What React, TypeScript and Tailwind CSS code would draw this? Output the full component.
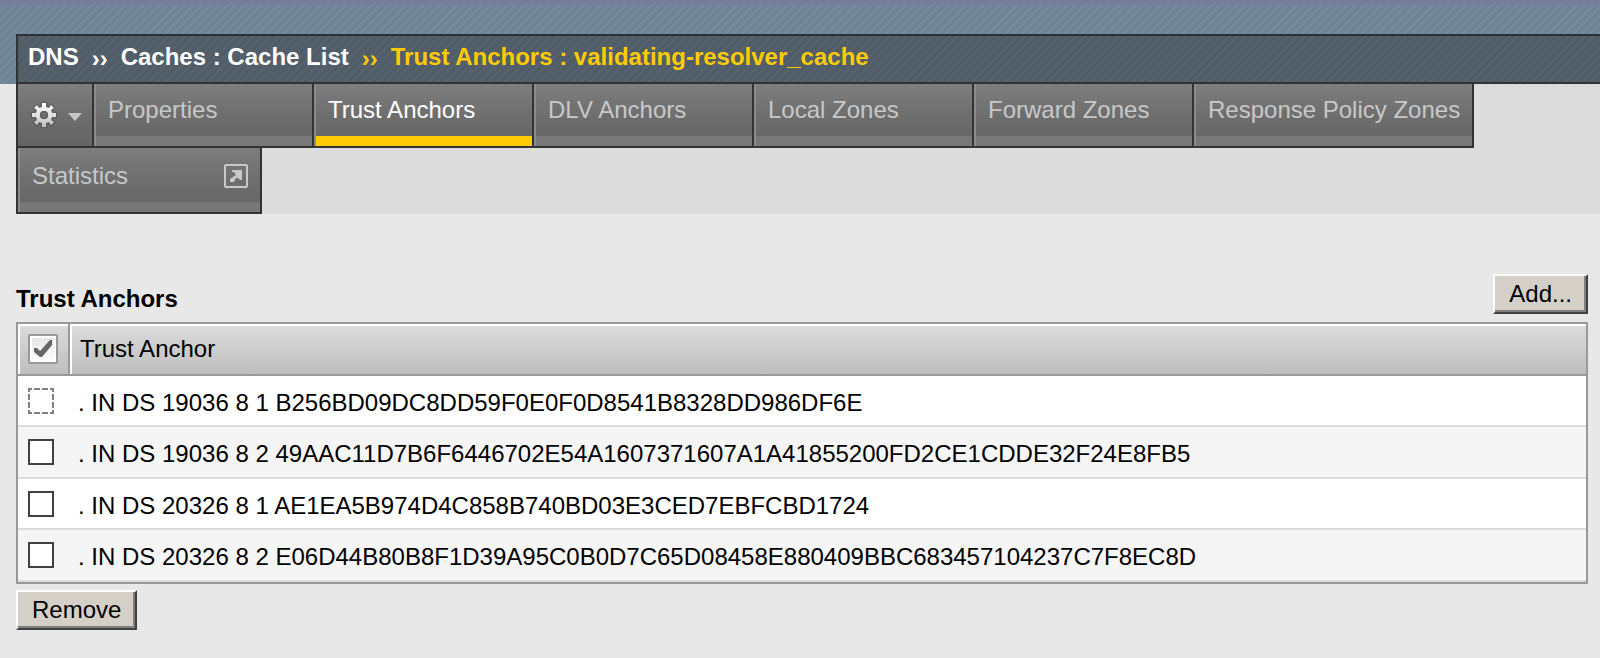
import React from "react";

const tabs = [
  { label: "Properties" },
  { label: "Trust Anchors", active: true },
  { label: "DLV Anchors" },
  { label: "Local Zones" },
  { label: "Forward Zones" },
  { label: "Response Policy Zones", wide: true },
];

const anchors = [
  ". IN DS 19036 8 1 B256BD09DC8DD59F0E0F0D8541B8328DD986DF6E",
  ". IN DS 19036 8 2 49AAC11D7B6F6446702E54A1607371607A1A41855200FD2CE1CDDE32F24E8FB5",
  ". IN DS 20326 8 1 AE1EA5B974D4C858B740BD03E3CED7EBFCBD1724",
  ". IN DS 20326 8 2 E06D44B80B8F1D39A95C0B0D7C65D08458E880409BBC683457104237C7F8EC8D",
];

const tabFill = "bg-linear-to-b from-[#7f7e7f] via-[#6e6e6f] to-[#646465]";

const raisedButton =
  "border-2 border-t-white border-r-[#404040] border-b-[#404040] border-l-white bg-[#d4d0c8] shadow-[inset_-2px_-2px_0_#808080]";

function GearIcon() {
  return (
    <svg width="28" height="28" viewBox="-14 -14 28 28" aria-hidden="true">
      <defs>
        <linearGradient id="gear" x1="0" y1="0" x2="0" y2="1">
          <stop offset="0" stopColor="#ffffff" />
          <stop offset="1" stopColor="#c0c0c0" />
        </linearGradient>
      </defs>
      <path
        fill="url(#gear)"
        stroke="#555"
        strokeOpacity="0.6"
        strokeWidth="3"
        strokeLinejoin="round"
        paintOrder="stroke"
        fillRule="evenodd"
        d="M-2-12H2V-8L5-7 7-10 10-7 7-5 8-2H12V2H8L7 5 10 7 7 10 5 7 2 8V12H-2V8L-5 7-7 10-10 7-7 5-8 2H-12V-2H-8L-7-5-10-7-7-10-5-7-2-8ZM-2-4L-4-2V2L-2 4H2L4 2V-2L2-4Z"
      />
    </svg>
  );
}

function PopOutIcon() {
  return (
    <svg width="24" height="24" viewBox="0 0 24 24" aria-hidden="true">
      <rect x="1" y="1" width="22" height="22" rx="1" fill="none" stroke="#c8c8c8" strokeWidth="2" />
      <path d="M8 6H18V16H16L14 14 12 14 10 18H6V15L12 11 10 8H8Z" fill="#c8c8c8" />
    </svg>
  );
}

function DashedOutline() {
  return (
    <svg className="pointer-events-none absolute inset-0" width="26" height="26" aria-hidden="true">
      <path
        d="M0 1H26M0 25H26M1 0V26M25 0V26"
        stroke="#808080"
        strokeWidth="2"
        strokeDasharray="6 2"
        strokeDashoffset="2"
      />
    </svg>
  );
}

export default function App() {
  return (
    <div className="min-h-screen bg-[#e8e8e8] font-['Liberation_Sans',Arial,sans-serif] text-2xl leading-7 text-black">
      <header className="border-t-[5px] border-[#767d9a] bg-[#6e8497] bg-[repeating-linear-gradient(135deg,transparent_0px,transparent_3px,#768b9b_4px,#768b9b_6px)] pt-[29px] pl-4">
        <nav
          aria-label="Breadcrumb"
          className="flex h-[50px] items-center gap-[13px] border-2 border-r-0 border-[#303335] bg-[#505c68] bg-[repeating-linear-gradient(135deg,transparent_0px,transparent_3px,#55616b_4px,#55616b_6px)] pb-1 pl-2.5 font-bold whitespace-nowrap text-white"
        >
          <a href="#dns">DNS</a>
          <span aria-hidden="true" className="pt-1">››</span>
          <a href="#caches">Caches : Cache List</a>
          <span aria-hidden="true" className="pt-1 text-[#ffcb05]">››</span>
          <span className="text-[#ffcb05]">Trust Anchors : validating-resolver_cache</span>
        </nav>
      </header>

      <nav aria-label="Sections" className="ml-4 flex flex-wrap bg-[#dcdcdc] text-[#c8c8c8]">
        <button
          type="button"
          aria-label="Options"
          className={`flex h-16 w-[78px] items-center gap-2.5 border-2 border-t-0 border-[#333] pl-3 ${tabFill}`}
        >
          <GearIcon />
          <svg className="mt-1" width="14" height="8" viewBox="0 0 14 8" aria-hidden="true">
            <path d="M0 0H14L7 8Z" fill="#c8c8c8" />
          </svg>
        </button>
        {tabs.map((t) => (
          <div
            key={t.label}
            className={`h-16 border-r-2 border-b-2 border-[#333] ${t.wide ? "w-[280px]" : "w-[220px]"}`}
          >
            <a
              href="#tab"
              aria-current={t.active ? "page" : undefined}
              className={`flex h-full flex-col border-l-2 border-[#8c8c8c] whitespace-nowrap ${tabFill}`}
            >
              <span className={`flex-1 pt-3 pl-3 ${t.active ? "text-white" : ""}`}>{t.label}</span>
              <span className={`h-2.5 ${t.active ? "bg-[#ffcb05]" : "bg-[#787878]"}`} />
            </a>
          </div>
        ))}
        <div className="h-[66px] w-[246px] border-2 border-t-0 border-[#333]">
          <a href="#statistics" className={`flex h-full flex-col border-l-2 border-[#8c8c8c] ${tabFill}`}>
            <span className="flex flex-1 items-center justify-between px-3 pt-0.5">
              Statistics
              <PopOutIcon />
            </span>
            <span className="h-2.5 bg-[#787878]" />
          </a>
        </div>
      </nav>

      <main className="pt-15 pr-3 pl-4">
        <div className="flex items-start justify-between pb-2">
          <h1 className="pt-[11px] font-bold">Trust Anchors</h1>
          <button type="button" className={raisedButton}>
            <span className="block px-3.5 pt-1 pb-1">Add...</span>
          </button>
        </div>

        <table className="w-full border-separate border-spacing-0 border-2 border-[#999]">
          <thead>
            <tr className="h-[52px] text-left">
              <th className="w-[52px] border-r-2 border-b-2 border-[#999] bg-linear-to-b from-[#dcdcdc] to-[#bebebe] p-0 shadow-[inset_2px_2px_0_#fff]">
                <label className="relative ml-2.5 block size-[30px]">
                  <input
                    type="checkbox"
                    aria-label="Select all"
                    className="block size-[30px] appearance-none rounded-xs border-2 border-[#999] bg-linear-to-b from-[#e4e4e4] to-white shadow-[inset_0_0_0_2px_#fff]"
                  />
                  <svg className="pointer-events-none absolute inset-0" width="30" height="30" aria-hidden="true">
                    <path d="M6 14H9L12 17 22 6H24V11L14 23H12L6 18Z" fill="#666" />
                  </svg>
                </label>
              </th>
              <th className="border-b-2 border-[#999] bg-linear-to-b from-[#dcdcdc] to-[#bebebe] p-0 pl-2.5 font-normal shadow-[inset_2px_2px_0_#fff]">
                Trust Anchor
              </th>
            </tr>
          </thead>
          <tbody>
            {anchors.map((a, i) => (
              <tr key={a} className="bg-white odd:h-[51px] even:h-[52px] even:bg-[#f5f5f5]">
                <td className="border-b-2 border-[#dcdcdc] p-0">
                  <label className="relative ml-2.5 block size-[26px]">
                    <input
                      type="checkbox"
                      aria-label={a}
                      className={`block size-[26px] appearance-none bg-white ${i === 0 ? "" : "border-2 border-[#404040]"}`}
                    />
                    {i === 0 && <DashedOutline />}
                  </label>
                </td>
                <td className="border-b-2 border-[#dcdcdc] p-0 pt-1 pl-2 whitespace-nowrap">{a}</td>
              </tr>
            ))}
          </tbody>
        </table>

        <button type="button" className={`mt-1.5 ${raisedButton}`}>
          <span className="block px-3.5 pt-1 pb-1">Remove</span>
        </button>
      </main>
    </div>
  );
}
